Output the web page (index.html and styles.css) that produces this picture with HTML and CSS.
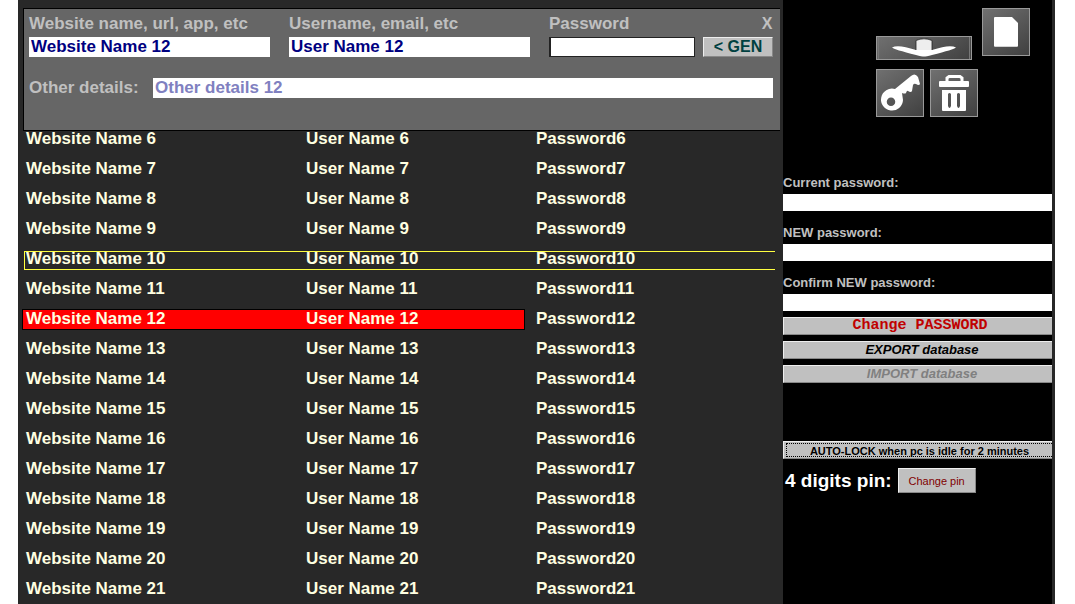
FILE: index.html
```html
<!DOCTYPE html>
<html lang="en">
<head>
<meta charset="utf-8">
<title>Password database</title>
<link rel="stylesheet" href="styles.css">
</head>
<body>
<div class="app">
  <main class="main">
    <form class="editor">
      <div class="fields">
        <div class="field wide"><label for="site">Website name, url, app, etc</label><input id="site" type="text" value="Website Name 12"></div>
        <div class="field wide"><label for="user">Username, email, etc</label><input id="user" type="text" value="User Name 12"></div>
        <div class="field secret"><label for="pass">Password</label><input id="pass" class="framed" type="text"></div>
        <div class="field tools"><button type="button" class="close">X</button><button type="button" class="gen">&lt; GEN</button></div>
      </div>
      <div class="details"><label for="other">Other details:</label><input id="other" type="text" value="Other details 12"></div>
    </form>
    <table class="entries">
      <colgroup><col class="col-site"><col class="col-user"><col></colgroup>
      <tbody>
        <tr><td>Website Name 6</td><td>User Name 6</td><td>Password6</td></tr>
        <tr><td>Website Name 7</td><td>User Name 7</td><td>Password7</td></tr>
        <tr><td>Website Name 8</td><td>User Name 8</td><td>Password8</td></tr>
        <tr><td>Website Name 9</td><td>User Name 9</td><td>Password9</td></tr>
        <tr class="hovered"><td>Website Name 10</td><td>User Name 10</td><td>Password10</td></tr>
        <tr><td>Website Name 11</td><td>User Name 11</td><td>Password11</td></tr>
        <tr class="selected"><td>Website Name 12</td><td>User Name 12</td><td>Password12</td></tr>
        <tr><td>Website Name 13</td><td>User Name 13</td><td>Password13</td></tr>
        <tr><td>Website Name 14</td><td>User Name 14</td><td>Password14</td></tr>
        <tr><td>Website Name 15</td><td>User Name 15</td><td>Password15</td></tr>
        <tr><td>Website Name 16</td><td>User Name 16</td><td>Password16</td></tr>
        <tr><td>Website Name 17</td><td>User Name 17</td><td>Password17</td></tr>
        <tr><td>Website Name 18</td><td>User Name 18</td><td>Password18</td></tr>
        <tr><td>Website Name 19</td><td>User Name 19</td><td>Password19</td></tr>
        <tr><td>Website Name 20</td><td>User Name 20</td><td>Password20</td></tr>
        <tr><td>Website Name 21</td><td>User Name 21</td><td>Password21</td></tr>
      </tbody>
    </table>
  </main>
  <aside class="side">
    <div class="icons">
      <div class="icon-row">
        <button type="button" class="icon flat" aria-label="Save entry">
          <svg viewBox="1 1 94 22"><path d="M2.500 0V24M93.500 0V24" stroke="#777" fill="none"/><path d="M16 11.500Q22 8 40 14V4.500Q48 1 56 4.500V14Q74 8 80 11.500Q78 13.500 56 19Q50 20.500 48 20.500Q46 20.500 40 19Q18 13.500 16 11.500Z" fill="#fff"/><path d="M40 14V4.500Q48 1 56 4.500V14" fill="#eee" stroke="#222" stroke-width=".8"/></svg>
        </button>
        <button type="button" class="icon" aria-label="New entry">
          <svg viewBox="1 1 46 46"><path d="M13 9H30L36 15V38Q36 39 35 39H13Q12 39 12 38V10Q12 9 13 9Z" transform="translate(0 8) scale(1 .99) translate(0 -8)" fill="#fff"/></svg>
        </button>
      </div>
      <div class="icon-row lower">
        <button type="button" class="icon" aria-label="Generate key">
          <svg viewBox="1 1 46 46"><path fill="#fff" fill-rule="evenodd" d="M19 20L35 7Q39 3.500 42 8L44 15Q43 17 40 15Q38 14 37 16L36 22Q35 24 32 22Q31 21 30 24Q29 25 26 24L27 31A11 11 0 1 1 19 20ZM15 28.500A4.200 4.200 0 1 0 15 37A4.200 4.200 0 1 0 15 28.500Z"/></svg>
        </button>
        <button type="button" class="icon" aria-label="Delete entry">
          <svg viewBox="1 1 46 46"><path d="M17 13V9L19 7.500H30L32 9V13" fill="none" stroke="#fff" stroke-width="3"/><rect x="9" y="12" width="30" height="6" rx="1" fill="#fff"/><path fill="#fff" fill-rule="evenodd" d="M12 21H36V41Q36 42 35 42H13Q12 42 12 41ZM18 25V37Q19.500 41 21 37V25Q19.500 23 18 25ZM27 25V37Q28.500 41 30 37V25Q28.500 23 27 25Z"/></svg>
        </button>
      </div>
    </div>
    <form class="change">
      <label for="current">Current password:</label><input id="current" type="password">
      <label for="new">NEW password:</label><input id="new" type="password">
      <label for="confirm">Confirm NEW password:</label><input id="confirm" type="password">
      <div class="actions">
        <button type="button" class="bar change-pass">Change PASSWORD</button>
        <button type="button" class="bar transfer">EXPORT database</button>
        <button type="button" class="bar transfer import" disabled>IMPORT database</button>
      </div>
    </form>
    <button type="button" class="bar autolock"><span>AUTO-LOCK when pc is idle for 2 minutes</span></button>
    <div class="pin"><span>4 digits pin:</span><button type="button" class="pin-button">Change pin</button></div>
  </aside>
</div>
</body>
</html>
```
FILE: styles.css
```css
*, *::before { box-sizing: border-box; }

body {
  margin: 0;
  background: #fff;
  font: bold 17px/16px "Liberation Sans", Arial, sans-serif;
}

input, button { margin: 0; padding: 0; border: 0; border-radius: 0; font: inherit; }
input { min-width: 0; background: #fff; outline: 0; }

.app {
  display: grid;
  grid-template-columns: minmax(0, 1fr) 272px;
  height: 100vh;
  margin: 0 20px 0 18px;
  overflow: hidden;
  background: #282828;
}

.main { padding: 8px 3px 0 5px; }

.editor {
  padding: 7px 7px 32px 5px;
  border: 1px solid #000;
  border-right: 0;
  background: #666;
  color: #c0c0c0;
}
.fields { display: flex; }
.field { display: flex; flex-direction: column; gap: 5px; }
.wide { flex: 1; min-width: 0; margin-right: 19px; white-space: nowrap; }
.secret { flex: none; width: 146px; margin-right: 8px; }
.tools { flex: none; width: 70px; }
.editor input { height: 20px; padding: 0 2px; color: #000080; }
.editor .framed { border: 1px solid #222; border-left-width: 2px; }
.close { align-self: flex-end; width: 12px; background: none; color: #c0c0c0; font-size: 16px; }
.gen {
  height: 20px;
  border: 1px solid #888;
  border-top-color: #eee;
  border-left-color: #eee;
  background: #c0c0c0;
  color: #004040;
  font-size: 16px;
}
.details { display: flex; align-items: center; margin-top: 21px; }
.details label { width: 124px; }
.editor .details input { flex: 1; color: #8080c0; }

.entries { width: 100%; border-collapse: collapse; table-layout: fixed; color: #ffffe1; }
.col-site { width: 280px; }
.col-user { width: 230px; }
.entries tr { position: relative; z-index: 0; height: 30px; }
.entries td { padding: 0 0 0 3px; vertical-align: top; }
.hovered td:first-child::before, .selected td:first-child::before { content: ""; position: absolute; z-index: -1; }
.hovered td:first-child::before { top: 0; left: 1px; right: 5px; height: 19px; border: 1px solid #ffff40; border-right: 0; }
.selected td:first-child::before { top: -2px; left: -1px; width: 503px; height: 21px; border: 1px solid #000; background: #f00; }

.side { border-right: 3px solid #282828; background: #000; color: #c0c0c0; font-size: 13px; }
.icons { padding: 8px 0 0 93px; }
.icon-row { display: flex; align-items: flex-start; gap: 10px; }
.lower { gap: 6px; margin-top: 9px; }
.icon {
  width: 48px;
  height: 48px;
  border: 1px solid #999;
  background: linear-gradient(145deg, #707070, #404040);
}
.icon svg { display: block; width: 100%; height: 100%; }
.flat { width: 96px; height: 24px; margin-top: 28px; }

.change { display: flex; flex-direction: column; margin-top: 58px; }
.change label { margin-bottom: 3px; }
.change input { height: 17px; margin-bottom: 14px; }
.actions { display: flex; flex-direction: column; gap: 6px; margin-top: -8px; }
.bar {
  display: block;
  width: 100%;
  height: 18px;
  padding: 0 0 0 8px;
  border: solid;
  border-width: 1px 0 1px 1px;
  border-color: #eee #888 #888 #eee;
  background: #c0c0c0;
  color: #000;
  line-height: 16px;
}
.change-pass { padding-left: 4px; color: #c00000; font-family: "Liberation Mono", monospace; font-size: 15px; }
.transfer { font-style: italic; }
.import { color: #808080; }
.autolock { margin-top: 58px; padding: 1px 0 1px 2px; font-size: 11px; }
.autolock span { display: block; height: 14px; border: 1px dotted #000; border-right: 0; line-height: 14px; }
.pin { display: flex; align-items: center; gap: 6px; margin: 9px 0 0 2px; color: #fff; font-size: 19px; }
.pin-button {
  width: 78px;
  height: 25px;
  border: 1px solid #888;
  border-top-color: #eee;
  border-left-color: #eee;
  background: #c0c0c0;
  color: #800000;
  font-size: 11px;
  font-weight: normal;
}
```
